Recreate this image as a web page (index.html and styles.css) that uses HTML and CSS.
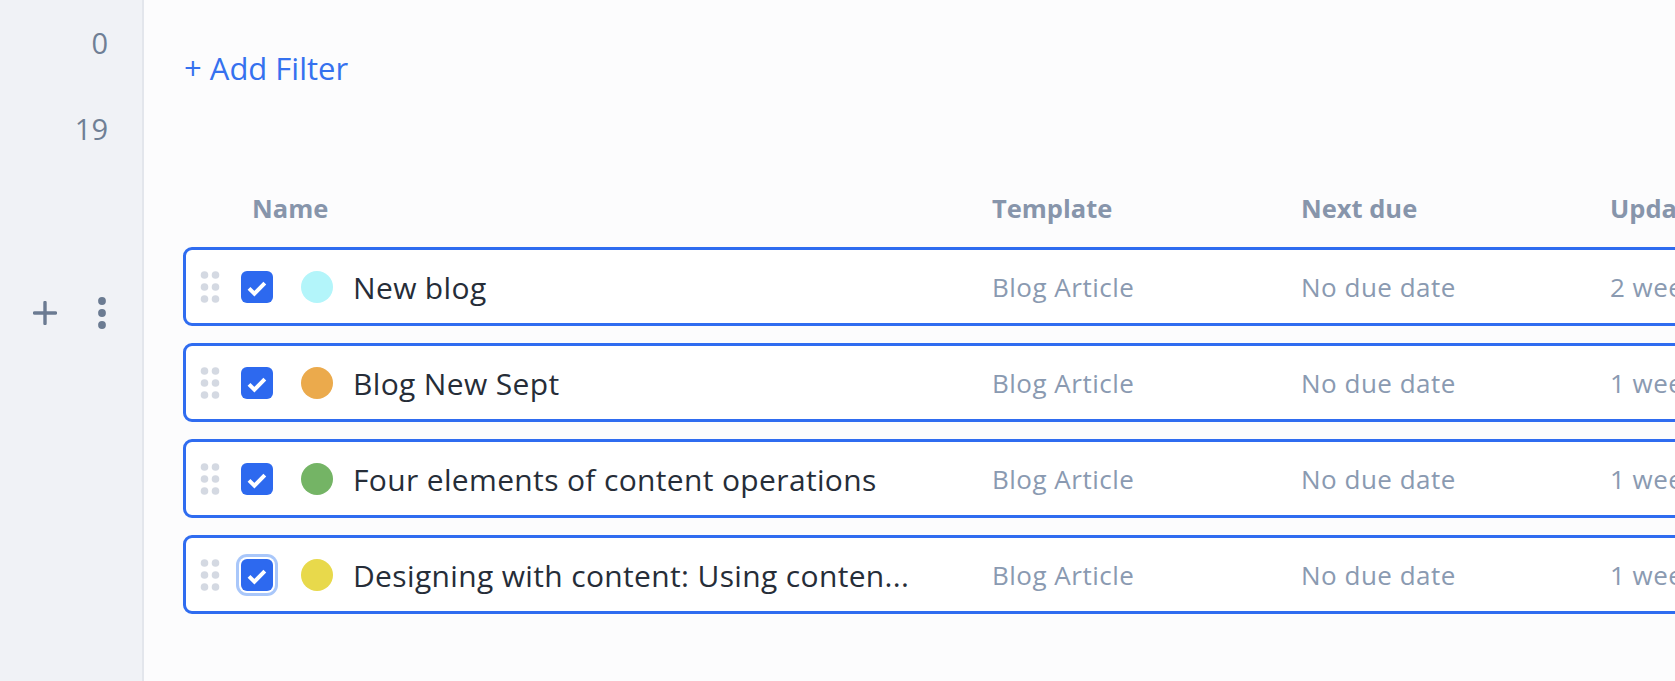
FILE: index.html
```html
<!DOCTYPE html>
<html lang="en">
<head>
<meta charset="utf-8">
<title>Content list</title>
<link rel="stylesheet" href="styles.css">
</head>
<body>
<div class="app">
  <aside class="sidebar">
    <div class="count count-first">0</div>
    <div class="count count-second">19</div>
    <div class="side-actions">
      <svg class="icon-plus" width="24" height="24" viewBox="0 0 24 24" aria-hidden="true">
        <path d="M12 1.5V22.5M1.5 12H22.5" stroke="#6b7b92" stroke-width="3.4" stroke-linecap="round" fill="none"/>
      </svg>
      <svg class="icon-kebab" width="10" height="34" viewBox="0 0 10 34" aria-hidden="true">
        <circle cx="5" cy="5" r="3.9" fill="#6b7b92"/>
        <circle cx="5" cy="17" r="3.9" fill="#6b7b92"/>
        <circle cx="5" cy="29" r="3.9" fill="#6b7b92"/>
      </svg>
    </div>
  </aside>
  <main class="main">
    <div class="add-filter">+ Add Filter</div>
    <div class="table">
      <div class="thead">
        <div class="th th-name">Name</div>
        <div class="th th-template">Template</div>
        <div class="th th-due">Next due</div>
        <div class="th th-updated">Updated</div>
      </div>

      <div class="row">
        <svg class="handle" width="20" height="32" viewBox="0 0 20 32" aria-hidden="true">
          <circle cx="4.5" cy="4" r="3.8"/><circle cx="15.5" cy="4" r="3.8"/>
          <circle cx="4.5" cy="16" r="3.8"/><circle cx="15.5" cy="16" r="3.8"/>
          <circle cx="4.5" cy="28" r="3.8"/><circle cx="15.5" cy="28" r="3.8"/>
        </svg>
        <span class="check"><svg width="32" height="32" viewBox="0 0 32 32" aria-hidden="true"><path d="M8 17.4L13.4 22.6L23.8 12.2" stroke="#fff" stroke-width="4" fill="none" stroke-linejoin="miter"/></svg></span>
        <span class="dot dot-cyan"></span>
        <span class="cell name">New blog</span>
        <span class="cell template">Blog Article</span>
        <span class="cell due">No due date</span>
        <span class="cell updated">2 weeks ago</span>
      </div>

      <div class="row">
        <svg class="handle" width="20" height="32" viewBox="0 0 20 32" aria-hidden="true">
          <circle cx="4.5" cy="4" r="3.8"/><circle cx="15.5" cy="4" r="3.8"/>
          <circle cx="4.5" cy="16" r="3.8"/><circle cx="15.5" cy="16" r="3.8"/>
          <circle cx="4.5" cy="28" r="3.8"/><circle cx="15.5" cy="28" r="3.8"/>
        </svg>
        <span class="check"><svg width="32" height="32" viewBox="0 0 32 32" aria-hidden="true"><path d="M8 17.4L13.4 22.6L23.8 12.2" stroke="#fff" stroke-width="4" fill="none" stroke-linejoin="miter"/></svg></span>
        <span class="dot dot-orange"></span>
        <span class="cell name">Blog New Sept</span>
        <span class="cell template">Blog Article</span>
        <span class="cell due">No due date</span>
        <span class="cell updated">1 week ago</span>
      </div>

      <div class="row">
        <svg class="handle" width="20" height="32" viewBox="0 0 20 32" aria-hidden="true">
          <circle cx="4.5" cy="4" r="3.8"/><circle cx="15.5" cy="4" r="3.8"/>
          <circle cx="4.5" cy="16" r="3.8"/><circle cx="15.5" cy="16" r="3.8"/>
          <circle cx="4.5" cy="28" r="3.8"/><circle cx="15.5" cy="28" r="3.8"/>
        </svg>
        <span class="check"><svg width="32" height="32" viewBox="0 0 32 32" aria-hidden="true"><path d="M8 17.4L13.4 22.6L23.8 12.2" stroke="#fff" stroke-width="4" fill="none" stroke-linejoin="miter"/></svg></span>
        <span class="dot dot-green"></span>
        <span class="cell name">Four elements of content operations</span>
        <span class="cell template">Blog Article</span>
        <span class="cell due">No due date</span>
        <span class="cell updated">1 week ago</span>
      </div>

      <div class="row">
        <svg class="handle" width="20" height="32" viewBox="0 0 20 32" aria-hidden="true">
          <circle cx="4.5" cy="4" r="3.8"/><circle cx="15.5" cy="4" r="3.8"/>
          <circle cx="4.5" cy="16" r="3.8"/><circle cx="15.5" cy="16" r="3.8"/>
          <circle cx="4.5" cy="28" r="3.8"/><circle cx="15.5" cy="28" r="3.8"/>
        </svg>
        <span class="check check-focus"><svg width="32" height="32" viewBox="0 0 32 32" aria-hidden="true"><path d="M8 17.4L13.4 22.6L23.8 12.2" stroke="#fff" stroke-width="4" fill="none" stroke-linejoin="miter"/></svg></span>
        <span class="dot dot-yellow"></span>
        <span class="cell name">Designing with content: Using conten...</span>
        <span class="cell template">Blog Article</span>
        <span class="cell due">No due date</span>
        <span class="cell updated">1 week ago</span>
      </div>
    </div>
  </main>
</div>
</body>
</html>
```

FILE: styles.css
```css
* { box-sizing: border-box; }

html, body {
  margin: 0;
  padding: 0;
  height: 100%;
  overflow: hidden;
}

body {
  font-family: "Open Sans", "Noto Sans", sans-serif;
  background: #fcfcfd;
  color: #262d38;
}

.app {
  display: flex;
  height: 100vh;
}

/* ---------- sidebar ---------- */
.sidebar {
  flex: 0 0 144px;
  background: #f0f2f6;
  border-right: 2px solid #e3e6ec;
  padding: 28px 34px 0 0;
  display: flex;
  flex-direction: column;
  align-items: flex-end;
}

.count {
  font-size: 29px;
  line-height: 30px;
  color: #6f7f95;
}

.count-second {
  margin-top: 56px;
}

.side-actions {
  align-self: stretch;
  display: flex;
  align-items: center;
  gap: 40px;
  padding-left: 33px;
  margin-top: 152px;
}

/* ---------- main ---------- */
.main {
  flex: 1;
  min-width: 0;
  overflow: hidden;
  padding: 52px 0 0 39px;
}

.add-filter {
  font-size: 31px;
  line-height: 32px;
  color: #3571ef;
  padding-left: 1px;
}

.table {
  width: 1700px;
  margin-top: 111px;
}

.thead {
  display: flex;
  font-size: 25.5px;
  line-height: 26px;
  font-weight: 700;
  color: #8795ab;
  margin-bottom: 26px;
}

.th-name { width: 809px; padding-left: 69px; }
.th-template { width: 309px; }
.th-due { width: 309px; }

.row {
  display: flex;
  align-items: center;
  height: 79px;
  margin-bottom: 17px;
  background: #fff;
  border: 3px solid #2f6cf0;
  border-radius: 9px;
  padding-left: 14px;
}

.handle {
  flex: 0 0 20px;
  fill: #d4d9e2;
  margin-top: 1px;
}

.check {
  flex: 0 0 32px;
  width: 32px;
  height: 32px;
  margin-left: 21px;
  border-radius: 6px;
  background: #2d69ef;
  display: flex;
}

.check-focus {
  box-shadow: 0 0 0 2px #fff, 0 0 0 5px #a9c7fa;
}

.dot {
  flex: 0 0 32px;
  width: 32px;
  height: 32px;
  border-radius: 50%;
  margin-left: 28px;
}

.dot-cyan { background: #b3f5fa; }
.dot-orange { background: #ebaa4c; }
.dot-green { background: #74b465; }
.dot-yellow { background: #e8d94b; }

.cell {
  white-space: nowrap;
}

.name {
  width: 637px;
  flex: 0 0 637px;
  margin-left: 20px;
  font-size: 30px;
  line-height: 30px;
  letter-spacing: 0.35px;
  padding-top: 3px;
  color: #262d38;
}

.template, .due, .updated {
  font-size: 26px;
  line-height: 26px;
  letter-spacing: 0.5px;
  color: #8a9ab1;
  padding-top: 1px;
  padding-left: 2px;
}

.template { width: 309px; flex: 0 0 309px; }
.due { width: 309px; flex: 0 0 309px; }
```
